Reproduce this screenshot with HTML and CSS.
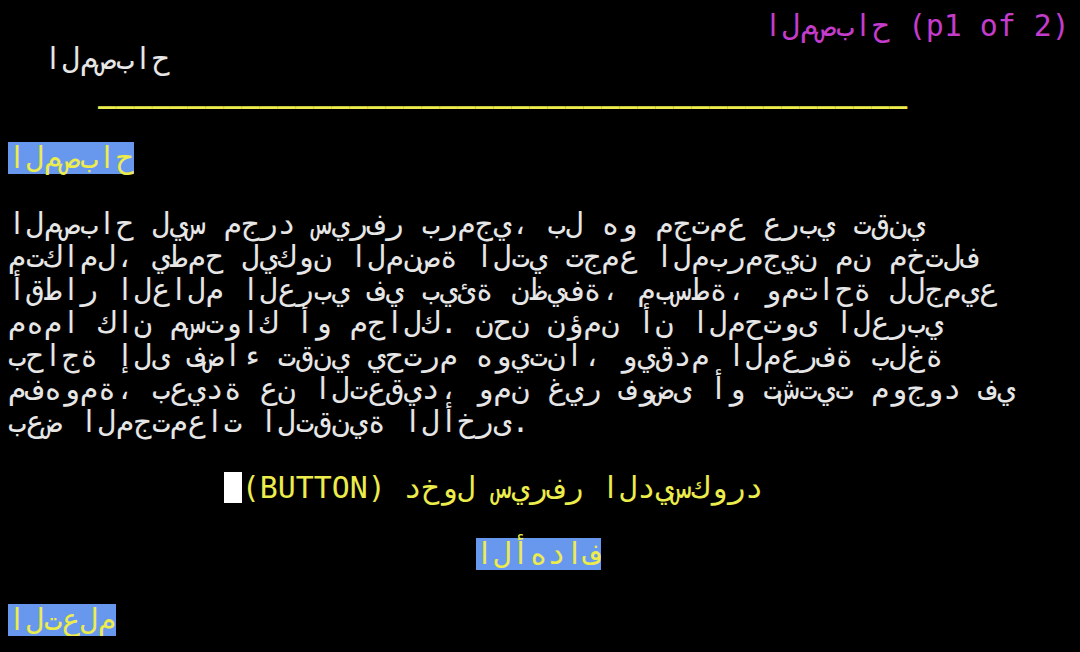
FILE: index.html
```html
<!DOCTYPE html>
<html lang="ar">
<head>
<meta charset="utf-8">
<title>المصباح</title>
<link rel="stylesheet" href="styles.css">
<script src="term.js" defer></script>
</head>
<body>
<main class="screen">
<div class="row title"><span class="magenta">المصباح (p1 of 2)</span></div>
<div class="row">  المصباح</div>
<div class="row">     <span class="yellow rule">_____________________________________________</span></div>
<div class="row"></div>
<div class="row"><span class="hl">المصباح</span></div>
<div class="row"></div>
<div class="row">المصباح ليس مجرد سيرفر برمجي، بل هو مجتمع عربي تقني</div>
<div class="row">متكامل، يطمح ليكون المنصة التي تجمع المبرمجين من مختلف</div>
<div class="row">أقطار العالم العربي في بيئة نظيفة، مبسطة، ومتاحة للجميع</div>
<div class="row">مهما كان مستواك أو مجالك. نحن نؤمن أن المحتوى العربي</div>
<div class="row">بحاجة إلى فضاء تقني يحترم هويتنا، ويقدم المعرفة بلغة</div>
<div class="row">مفهومة، بعيدة عن التعقيد، ومن غير فوضى أو تشتيت موجود في</div>
<div class="row">بعض المجتمعات التقنية الأخرى.</div>
<div class="row"></div>
<div class="row">            <span class="cursor"></span><span class="yellow">(BUTTON) دخول سيرفر الديسكورد</span></div>
<div class="row"></div>
<div class="row">                          <span class="hl">الأهداف</span></div>
<div class="row"></div>
<div class="row"><span class="hl">التعلم</span></div>
</main>
</body>
</html>
```

FILE: styles.css
```css
html, body {
  margin: 0;
  padding: 0;
  background: #000;
}

.screen {
  padding: 9px 0 0 8px;
  width: 59ch;
  font-family: "DejaVu Sans Mono", "Liberation Mono", monospace;
  font-size: 29.9px;
  line-height: 33px;
  color: #e6e6e6;
}

.row {
  height: 33px;
  white-space: pre;
  direction: ltr;
  text-align: left;
}

.title {
  text-align: right;
}

.magenta {
  color: #c43ccc;
}

.yellow {
  color: #ecec4c;
}

.cell {
  display: inline-block;
  vertical-align: top;
  width: 1ch;
  height: 33px;
  white-space: pre;
  direction: ltr;
  text-align: center;
}

.rule .cell {
  font-weight: bold;
}

.hl {
  display: inline-block;
  vertical-align: top;
  height: 32px;
  margin-top: 1px;
  background: #6897ee;
  color: #ecec4c;
}

.hl .cell {
  height: 32px;
  line-height: 31px;
}

.cursor {
  display: inline-block;
  vertical-align: top;
  width: 1ch;
  height: 31px;
  margin-top: 1px;
  background: #fff;
}
```

FILE: term.js
```js
// Terminal-style rendering: every character sits in its own fixed-width cell,
// in logical order from left to right, as a text console draws it.
(function () {
  function split(root) {
    var walker = document.createTreeWalker(root, NodeFilter.SHOW_TEXT);
    var nodes = [];
    while (walker.nextNode()) nodes.push(walker.currentNode);
    nodes.forEach(function (node) {
      var frag = document.createDocumentFragment();
      Array.from(node.nodeValue).forEach(function (c) {
        var cell = document.createElement('span');
        cell.className = 'cell';
        cell.textContent = c;
        frag.appendChild(cell);
      });
      node.parentNode.replaceChild(frag, node);
    });
  }

  document.querySelectorAll('.row').forEach(split);
})();
```
